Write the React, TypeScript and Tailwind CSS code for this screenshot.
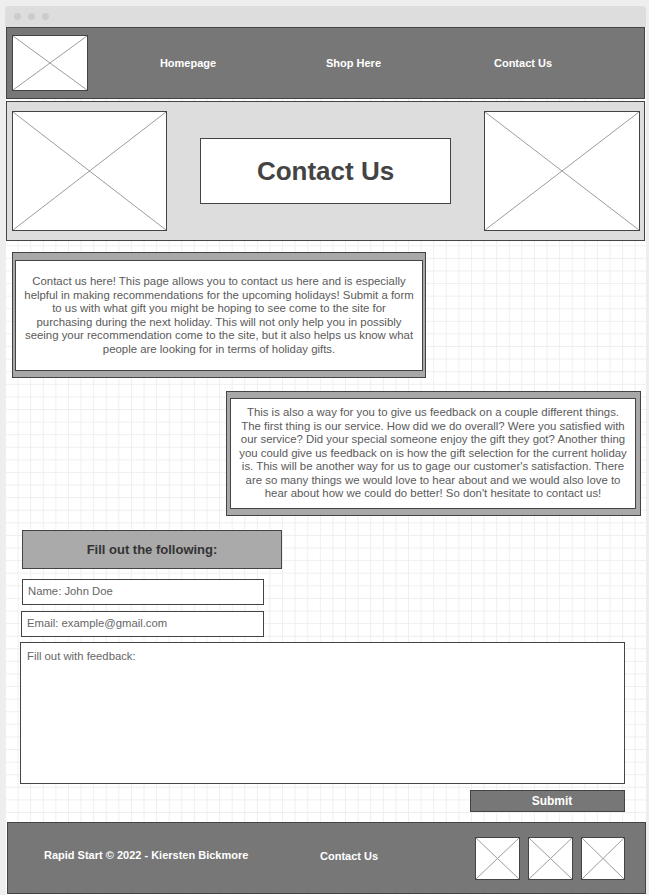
import React from "react";

function Placeholder({ className }: { className: string }) {
  return (
    <div className={`relative shrink-0 border border-[#444] bg-white ${className}`}>
      <svg className="absolute inset-0 h-full w-full" viewBox="0 0 100 100" preserveAspectRatio="none">
        <line x1="0" y1="0" x2="100" y2="100" stroke="#9c9c9c" strokeWidth="1" vectorEffect="non-scaling-stroke" />
        <line x1="100" y1="0" x2="0" y2="100" stroke="#9c9c9c" strokeWidth="1" vectorEffect="non-scaling-stroke" />
      </svg>
    </div>
  );
}

const introLines = [
  "Contact us here! This page allows you to contact us here and is especially",
  "helpful in making recommendations for the upcoming holidays! Submit a form",
  "to us with what gift you might be hoping to see come to the site for",
  "purchasing during the next holiday. This will not only help you in possibly",
  "seeing your recommendation come to the site, but it also helps us know what",
  "people are looking for in terms of holiday gifts.",
];

const feedbackLines = [
  "This is also a way for you to give us feedback on a couple different things.",
  "The first thing is our service. How did we do overall? Were you satisfied with",
  "our service? Did your special someone enjoy the gift they got? Another thing",
  "you could give us feedback on is how the gift selection for the current holiday",
  "is. This will be another way for us to gage our customer's satisfaction. There",
  "are so many things we would love to hear about and we would also love to",
  "hear about how we could do better! So don't hesitate to contact us!",
];

function TextCard({ lines, className }: { lines: string[]; className: string }) {
  return (
    <div className={`flex border border-[#444] bg-[#a8a8a8] ${className}`}>
      <div className="flex flex-1 items-center justify-center border border-[#444] bg-white px-[1px]">
        <p className="whitespace-nowrap text-center text-[11.4px] leading-[13.5px] text-[#5a5a5a]">
          {lines.map((l, i) => (
            <React.Fragment key={i}>
              {l}
              {i < lines.length - 1 && <br />}
            </React.Fragment>
          ))}
        </p>
      </div>
    </div>
  );
}

export default function App() {
  return (
    <div className="h-[895px] w-[649px] overflow-hidden bg-[#eeeeee] pl-[5px] pt-[6px] font-['Liberation_Sans',Arial,sans-serif]">
      <div className="flex h-[889px] w-[641px] flex-col rounded-t-[4px] bg-white bg-[linear-gradient(to_right,#efefef_1px,transparent_1px),linear-gradient(to_bottom,#efefef_1px,transparent_1px)] bg-[size:12.6px_12.6px]">
        {/* window bar */}
        <div className="flex h-[21px] items-center gap-[7px] rounded-t-[4px] bg-[#dddddd] pl-[9px]">
          <span className="h-[7px] w-[7px] rounded-full bg-[#cccccc]" />
          <span className="h-[7px] w-[7px] rounded-full bg-[#cccccc]" />
          <span className="h-[7px] w-[7px] rounded-full bg-[#cccccc]" />
        </div>

        <div className="flex flex-col px-[1px]">
          {/* Nav */}
          <header className="flex h-[72px] items-center border border-[#444] bg-[#777777] pl-[5px] text-[11px] font-bold text-white">
            <Placeholder className="h-[56px] w-[76px]" />
            <nav className="ml-[17px] flex">
              <span className="w-[166px] text-center">Homepage</span>
              <span className="w-[165px] text-center">Shop Here</span>
              <span className="w-[174px] text-center">Contact Us</span>
            </nav>
          </header>

          {/* Hero */}
          <section className="mt-[2px] flex h-[140px] items-center justify-between border border-[#444] bg-[#dddddd] pl-[5px] pr-[4px]">
            <Placeholder className="h-[120px] w-[155px]" />
            <div className="flex h-[66px] w-[251px] items-center justify-center border border-[#444] bg-white">
              <h1 className="text-[26px] font-bold text-[#444]">Contact Us</h1>
            </div>
            <Placeholder className="h-[120px] w-[156px]" />
          </section>

          <TextCard lines={introLines} className="ml-[6px] mt-[11px] h-[126px] w-[414px] pb-[6px] pl-[2px] pr-[2px] pt-[7px]" />
          <TextCard lines={feedbackLines} className="ml-[220px] mt-[13px] h-[125px] w-[415px] pb-[6px] pl-[3px] pr-[4px] pt-[6px]" />

          {/* Form */}
          <div className="ml-[16px] mt-[14px] flex h-[39px] w-[260px] items-center justify-center border border-[#444] bg-[#aaaaaa]">
            <span className="text-[13px] font-bold text-[#333]">Fill out the following:</span>
          </div>
          <div className="ml-[16px] mt-[10px] flex h-[26px] w-[242px] items-center border border-[#444] bg-white pb-[2px] pl-[5px] text-[11.3px] text-[#666]">
            Name: John Doe
          </div>
          <div className="ml-[15px] mt-[6px] flex h-[26px] w-[243px] items-center border border-[#444] bg-white pb-[2px] pl-[5px] text-[11.3px] text-[#666]">
            Email: example@gmail.com
          </div>
          <div className="ml-[14px] mt-[5px] h-[142px] w-[605px] border border-[#444] bg-white pl-[6px] pt-[5px] text-[11.3px] text-[#666]">
            Fill out with feedback:
          </div>
          <div className="ml-[464px] mt-[6px] flex h-[22px] w-[155px] items-center justify-center border border-[#444] bg-[#777777] pl-[9px] text-[12px] font-bold text-white">
            Submit
          </div>

          {/* Footer */}
          <footer className="ml-[1px] mt-[10px] flex h-[72px] w-[639px] items-center border border-[#444] bg-[#777777] text-[11px] font-bold text-white">
            <span className="mb-[5px] ml-[36px] w-[276px]">Rapid Start © 2022 - Kiersten Bickmore</span>
            <span className="mb-[3px]">Contact Us</span>
            <div className="ml-auto mr-[20px] flex gap-[8px]">
              <Placeholder className="h-[43px] w-[45px]" />
              <Placeholder className="h-[43px] w-[45px]" />
              <Placeholder className="h-[43px] w-[44px]" />
            </div>
          </footer>
        </div>
      </div>
    </div>
  );
}
